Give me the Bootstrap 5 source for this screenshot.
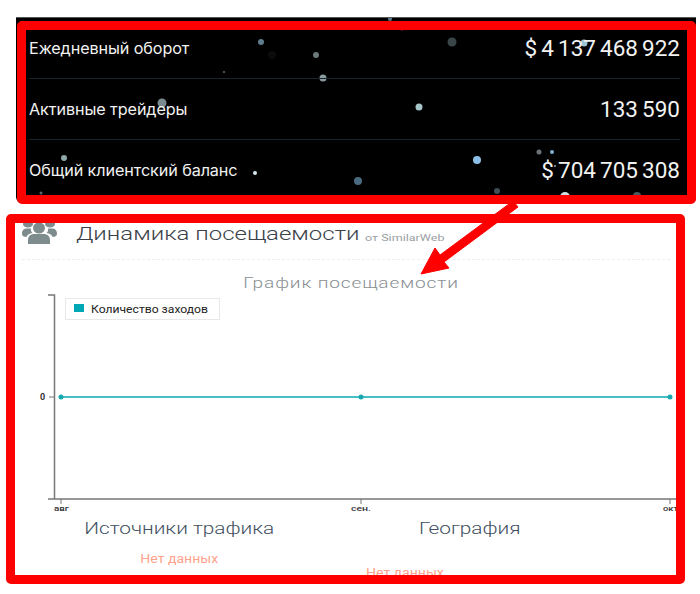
<!DOCTYPE html>
<html lang="ru">
<head>
<meta charset="utf-8">
<title>Статистика</title>
<link href="https://cdn.jsdelivr.net/npm/bootstrap@5.3.0/dist/css/bootstrap.min.css" rel="stylesheet">
<style>
html,body{background:#fff;margin:0;overflow:hidden}
body{width:700px;height:594px;position:relative;font-family:"Roboto","Liberation Sans",sans-serif}
.stats-shell{position:relative;width:680px;height:186px;margin:17px 0 0 16px;padding:3px 0 0 1px;background:#000;border-top:1px solid #555;border-radius:0 0 6px 6px}
.dots{position:absolute;left:0;top:0;width:680px;height:186px}
.stats-frame{position:relative;height:183px;width:679px;border:9px solid #f00;border-radius:5px;overflow:hidden;padding:0 7px 0 3px;color:#f2f2f2}
.stat-row{height:61px;padding:15px 0;border-bottom:1px solid #17252e;line-height:30px}
.stat-row:first-child{height:49px;padding-top:3px}
.stat-label{font-family:"Inter","Liberation Sans",sans-serif;font-size:16.2px;letter-spacing:-.1px}
.stat-value{font-family:"Roboto","Liberation Sans",sans-serif;font-size:22.5px;font-weight:400;word-spacing:-1.5px}
.visits{width:679px;height:370px;margin:11px 0 0 6px;border:9.5px solid #f00;border-radius:5px;overflow:hidden;background:#fff}
.visits-head{height:37px;margin:0 6px 0 7px;border-bottom:1px dashed #e9eeee;padding-bottom:12px}
.users-icon{width:35px;height:21px;flex:none;align-self:flex-start}
.visits-title{font-size:18.5px;font-weight:300;color:#3a4148;transform:scaleX(1.295);transform-origin:left center;margin-left:19px;width:207px;white-space:nowrap}
.visits-src{font-size:9.5px;color:#9aa0a4;margin-left:82px;transform:scaleX(1.32);transform-origin:left center;padding-top:7px;white-space:nowrap}
.chart-name{font-size:15.5px;font-weight:300;color:#8a8f93;text-align:center;padding:13px 0 0 18px;line-height:20px;height:32px;letter-spacing:.7px;transform:scaleX(1.23);transform-origin:355px center}
.chart-svg{display:block;width:661px;height:240px;margin-top:-16px}
.sub-title{font-size:16px;font-weight:300;color:#3f4f60;white-space:nowrap;line-height:20px;transform:scaleX(1.3)}
.no-data{font-size:12px;color:#ffa28c;line-height:16px;white-space:nowrap;transform:scaleX(1.17)}
.text-row{margin-top:3px}
.src-col{padding-right:2px}
.geo-title{margin-left:73px;width:101px;transform-origin:left center}
.geo-empty{margin:26px 0 0 20px;transform-origin:left center}
.src-empty{margin-top:12px}
.arrow-over{position:absolute;left:0;top:0;width:700px;height:594px;pointer-events:none}
</style>
</head>
<body>
<section class="stats-shell">
<svg class="dots" viewBox="16 17 680 186" aria-hidden="true">
<g>
<circle cx="261" cy="41" r="3" fill="#5f7d8c"/><circle cx="316" cy="54" r="3" fill="#6b7a7a"/><circle cx="323" cy="77" r="3.5" fill="#8a9a9f"/><circle cx="224" cy="71" r="1" fill="#5b7383"/><circle cx="272" cy="54" r="4" fill="#0a0c0c"/><circle cx="162" cy="102" r="4.5" fill="#7b8a90"/><circle cx="64" cy="157" r="3" fill="#8fa5a8"/><circle cx="255" cy="172" r="2" fill="#d0e8ee"/><circle cx="41" cy="192" r="1.5" fill="#556670"/><circle cx="452" cy="41" r="4.5" fill="#3a4548"/><circle cx="584" cy="42" r="3.5" fill="#9dc4d4"/><circle cx="419" cy="106" r="3.5" fill="#a5c5c8"/><circle cx="477" cy="159" r="4" fill="#8cc0e8"/><circle cx="539" cy="151" r="2.5" fill="#6a7478"/><circle cx="552" cy="151" r="2" fill="#7ab0d0"/><circle cx="358" cy="180" r="4" fill="#4a6a80"/><circle cx="497" cy="190" r="3" fill="#3f4f55"/><circle cx="565" cy="196" r="5" fill="#cfe0e5"/><circle cx="637" cy="195" r="4" fill="#4a5a60"/><circle cx="390" cy="18" r="2" fill="#5a7a8a"/><circle cx="402" cy="28" r="1.5" fill="#c33"/><circle cx="555" cy="165" r="1" fill="#9ab"/>
</g>
</svg>
<div class="stats-frame">
<div class="stat-row d-flex justify-content-between"><span class="stat-label">Ежедневный оборот</span><span class="stat-value">$ 4 137 468 922</span></div>
<div class="stat-row d-flex justify-content-between"><span class="stat-label">Активные трейдеры</span><span class="stat-value">133 590</span></div>
<div class="stat-row d-flex justify-content-between border-0"><span class="stat-label">Общий клиентский баланс</span><span class="stat-value">$ 704 705 308</span></div>
</div>
</section>

<section class="visits">
<div class="visits-head d-flex align-items-center">
<svg class="users-icon" viewBox="0 0 35 21" aria-hidden="true"><g fill="#7f8c8d"><ellipse cx="17" cy="5" rx="6" ry="5.5"/><path d="M6 21v-4c0-4 3-6 6-6h10c3 0 6 2 6 6v4c-2 0-4 1-6 1H12c-2 0-4-1-6-1z"/><ellipse cx="6" cy="1" rx="5" ry="3.6"/><ellipse cx="28" cy="1" rx="5" ry="3.6"/><path d="M0 11c0-4 2-5.500 5-5.500h4c-.5 2 .5 3.500 1.500 4.500C7 10.500 5 12 4.500 14 2 14 0 13 0 11z"/><path d="M35 11c0-4-2-5.500-5-5.500h-4c.5 2-.5 3.500-1.500 4.500 3.500.5 5.500 2 6 4 2.500 0 4.500-1 4.500-3z"/></g></svg>
<span class="visits-title">Динамика посещаемости</span>
<span class="visits-src">от SimilarWeb</span>
</div>
<div class="chart-name">График посещаемости</div>
<svg class="chart-svg" viewBox="15 276 661 240" aria-label="График посещаемости">
<path d="M48 295h6.500V499M48 499H676" fill="none" stroke="#777" stroke-width="1.500"/>
<path d="M49 397h5M61 499v5M361 499v5M670 499v5" stroke="#777" stroke-width="1"/>
<line x1="61" y1="397" x2="670" y2="397" stroke="#45bfc4" stroke-width="2"/>
<g fill="#1aa9b0"><circle cx="61" cy="397" r="2.500"/><circle cx="361" cy="397" r="2.500"/><circle cx="670" cy="397" r="2.500"/></g>
<rect x="65.500" y="298.500" width="154" height="21" fill="#fff" stroke="#e8e8e8"/>
<rect x="74" y="304" width="10" height="8" fill="#00a8b5"/>
<text x="91" y="313" font-size="10" fill="#222" font-family="Roboto,sans-serif" textLength="117" lengthAdjust="spacingAndGlyphs">Количество заходов</text>
<text x="40" y="400" font-size="9" font-weight="700" fill="#333" font-family="Roboto,sans-serif">0</text>
<g font-size="8" font-weight="500" fill="#333" font-family="Roboto,sans-serif">
<text x="54" y="511" textLength="15" lengthAdjust="spacingAndGlyphs">авг</text>
<text x="351" y="511" textLength="20" lengthAdjust="spacingAndGlyphs">сен.</text>
<text x="663" y="511" textLength="15" lengthAdjust="spacingAndGlyphs">окт</text>
</g>
</svg>
<div class="row g-0 text-row">
<div class="col-6 text-center src-col">
<div class="sub-title">Источники трафика</div>
<div class="no-data src-empty">Нет данных</div>
</div>
<div class="col-6">
<div class="sub-title geo-title">География</div>
<div class="no-data geo-empty">Нет данных</div>
</div>
</div>
</section>

<svg class="arrow-over" viewBox="0 0 700 594" aria-hidden="true">
<path d="M513 201l5 6-74 55 5 6-28 6 14-26 5 7z" fill="#f00" stroke="#f00" stroke-width="1" stroke-linejoin="round"/>
</svg>
<script src="https://cdn.jsdelivr.net/npm/bootstrap@5.3.0/dist/js/bootstrap.bundle.min.js"></script>
</body>
</html>
